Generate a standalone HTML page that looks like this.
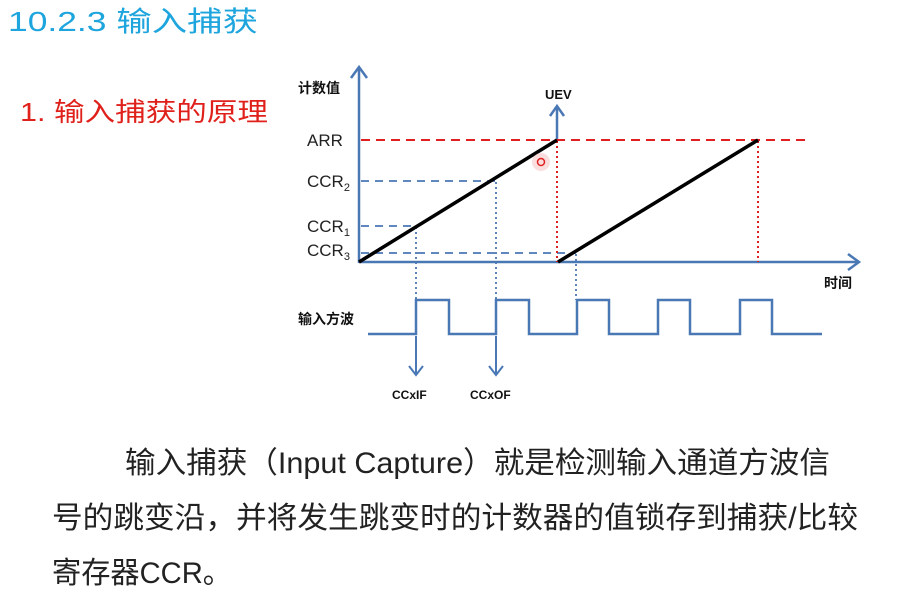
<!DOCTYPE html>
<html><head><meta charset="utf-8"><style>
html,body{margin:0;padding:0;background:#fff;width:899px;height:593px;overflow:hidden}
svg{display:block}
text{font-family:"Liberation Sans","Noto Sans CJK SC",sans-serif}
</style></head><body>
<svg width="899" height="593" viewBox="0 0 899 593" xmlns="http://www.w3.org/2000/svg">
<text x="8" y="31" font-size="28" fill="#1ea5dd" textLength="250" lengthAdjust="spacingAndGlyphs">10.2.3 输入捕获</text>
<text x="20" y="121" font-size="26" fill="#e0201a" textLength="248" lengthAdjust="spacingAndGlyphs">1. 输入捕获的原理</text>

<g stroke="#4a78b5" stroke-width="2.5" fill="none">
<line x1="359" y1="263" x2="359" y2="68"/>
<polyline points="351,78 359,67 367,78"/>
<line x1="359" y1="262" x2="858" y2="262"/>
<polyline points="848,254 859,262 848,270"/>
<line x1="557" y1="140" x2="557" y2="106"/>
<polyline points="550,116 557,106 564,116"/>
</g>
<g stroke="#4a78b5" stroke-width="1.8" stroke-dasharray="8,6" fill="none">
<line x1="361" y1="181" x2="496" y2="181"/>
<line x1="361" y1="226" x2="416" y2="226"/>
<line x1="361" y1="253" x2="576" y2="253"/>
</g>
<g stroke="#4a78b5" stroke-width="1.8" stroke-dasharray="2,3" fill="none">
<line x1="416" y1="227" x2="416" y2="300"/>
<line x1="496" y1="182" x2="496" y2="300"/>
<line x1="576" y1="254" x2="576" y2="300"/>
</g>
<line x1="361" y1="140" x2="808" y2="140" stroke="#e02020" stroke-width="2" stroke-dasharray="9,6"/>
<g stroke="#e02020" stroke-width="2" stroke-dasharray="2,3">
<line x1="557" y1="141" x2="557" y2="262"/>
<line x1="758" y1="141" x2="758" y2="262"/>
</g>
<g stroke="#000" stroke-width="3.5">
<line x1="359" y1="262" x2="557" y2="140"/>
<line x1="558" y1="262" x2="758" y2="140"/>
</g>
<circle cx="541" cy="162" r="9" fill="#f6c8c8" opacity="0.6"/>
<circle cx="541" cy="162" r="3.5" fill="none" stroke="#e02020" stroke-width="1.5"/>

<g font-size="17" fill="#222">
<text x="307" y="146">ARR</text>
<text x="307" y="187">CCR<tspan font-size="11" dy="4">2</tspan></text>
<text x="307" y="232">CCR<tspan font-size="11" dy="4">1</tspan></text>
<text x="307" y="256">CCR<tspan font-size="11" dy="4">3</tspan></text>
</g>
<g font-size="14" font-weight="bold" fill="#111">
<text x="298" y="93">计数值</text>
<text x="545" y="99" font-size="13">UEV</text>
<text x="824" y="288">时间</text>
<text x="298" y="324">输入方波</text>
<text x="392" y="399" font-size="12">CCxIF</text>
<text x="470" y="399" font-size="12">CCxOF</text>
</g>
<polyline fill="none" stroke="#4a78b5" stroke-width="2.5" points="368,334 416,334 416,300 449,300 449,334 496,334 496,300 529,300 529,334 577,334 577,300 609,300 609,334 658,334 658,300 690,300 690,334 740,334 740,300 772,300 772,334 822,334"/>
<g stroke="#4a78b5" stroke-width="2" fill="none">
<line x1="416" y1="336" x2="416" y2="374"/>
<polyline points="409,366 416,375 423,366"/>
<line x1="496" y1="336" x2="496" y2="374"/>
<polyline points="489,366 496,375 503,366"/>
</g>

<g font-size="30" fill="#222">
<text x="125" y="473" textLength="705" lengthAdjust="spacingAndGlyphs">输入捕获（Input Capture）就是检测输入通道方波信</text>
<text x="52" y="528" textLength="806" lengthAdjust="spacingAndGlyphs">号的跳变沿，并将发生跳变时的计数器的值锁存到捕获/比较</text>
<text x="52" y="583" textLength="180" lengthAdjust="spacingAndGlyphs">寄存器CCR。</text>
</g>
</svg>
</body></html>
